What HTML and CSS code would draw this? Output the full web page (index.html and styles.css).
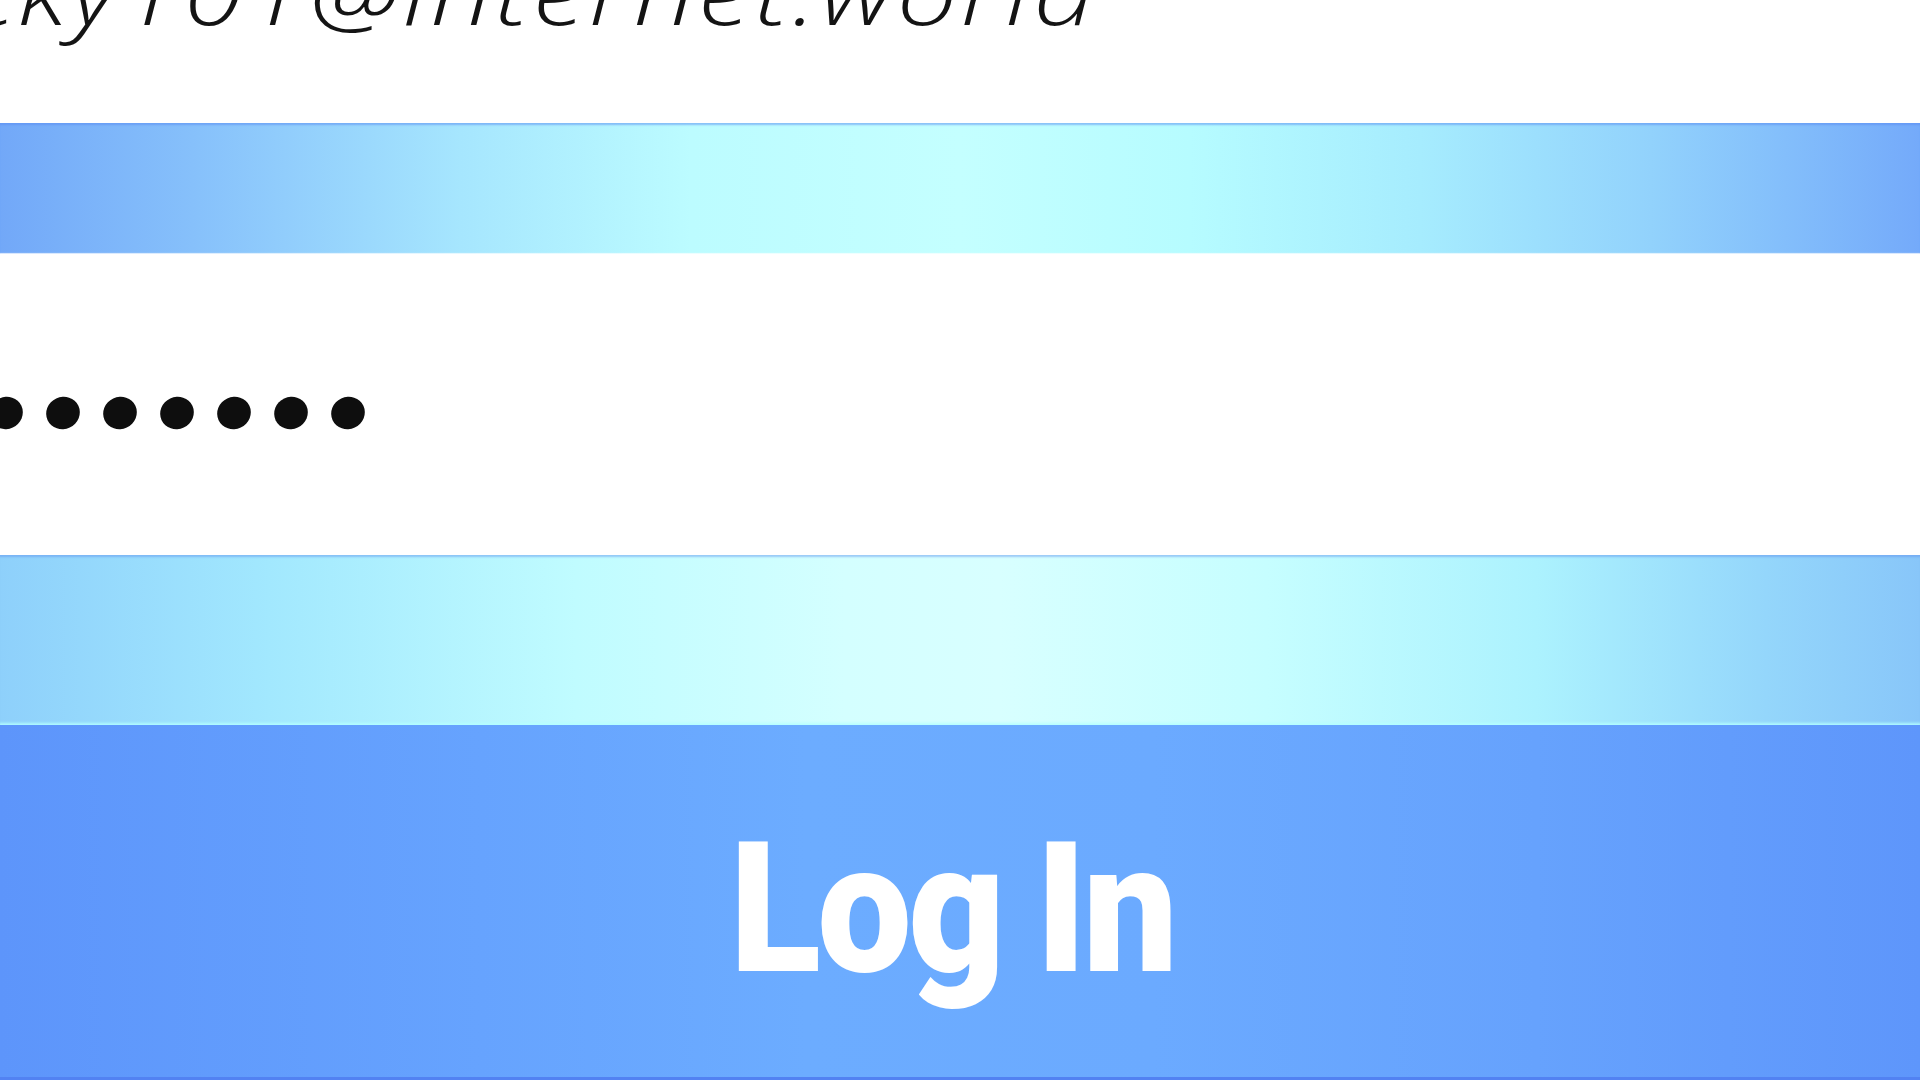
FILE: index.html
```html
<!DOCTYPE html>
<html lang="en">
<head>
<meta charset="utf-8">
<title>Log In</title>
<link rel="stylesheet" href="styles.css">
</head>
<body>
<main class="form">
  <div class="field field-email">
    <div class="email-box">
      <span class="email-text">becky101@internet.world</span>
    </div>
  </div>
  <div class="band band-top"></div>
  <div class="field field-password">
    <div class="dots" aria-label="password">
      <span class="dot"></span><span class="dot"></span><span class="dot"></span><span class="dot"></span><span class="dot"></span><span class="dot"></span><span class="dot"></span>
    </div>
  </div>
  <div class="band band-bottom"></div>
  <button class="login"><span class="login-label">Log In</span></button>
</main>
</body>
</html>
```
FILE: styles.css
```css
* { box-sizing: border-box; }
html, body {
  margin: 0;
  padding: 0;
  width: 1920px;
  height: 1080px;
  overflow: hidden;
  background: #ffffff;
}
.form {
  display: flex;
  flex-direction: column;
  width: 1920px;
  height: 1080px;
}
.field {
  background: #ffffff;
  overflow: hidden;
}
.field-email {
  height: 123px;
  display: flex;
  align-items: flex-start;
}
.email-box {
  width: 1099px;
  flex: none;
  display: flex;
  justify-content: flex-end;
}
.email-text {
  flex: none;
  font-family: "Open Sans", "Lato", sans-serif;
  font-weight: 300;
  font-style: italic;
  font-size: 88px;
  line-height: 88px;
  letter-spacing: 3px;
  color: #141414;
  white-space: nowrap;
  margin-top: -53px;
  transform: scaleX(1.22);
  transform-origin: right center;
}
.band-top {
  height: 131px;
  background: linear-gradient(90deg, #72a8f8 0%, #86c0fb 10%, #a6e6fe 24%, #bcfcff 36%, #c4ffff 50%, #b6fcff 62%, #a6ecfe 74%, #92d2fc 86%, #74aafa 100%);
  box-shadow: inset 0 3px 2px -1px rgba(90, 140, 240, 0.55), inset 0 -2px 1px -1px rgba(255, 255, 255, 0.8);
}
.field-password {
  height: 301px;
  display: flex;
  align-items: center;
}
.dots {
  display: flex;
  gap: 23px;
  margin-left: -11px;
  margin-top: 17px;
}
.dot {
  width: 34px;
  height: 32px;
  border-radius: 50%;
  background: #0e0e0e;
  transform: rotate(-25deg);
}
.band-bottom {
  height: 170px;
  background: linear-gradient(90deg, #8ed0fb 0%, #a2e8fe 14%, #c0fcff 30%, #d4ffff 44%, #d8ffff 52%, #c6feff 66%, #acf2fe 80%, #94d6fb 92%, #88c6f9 100%);
  box-shadow: inset 0 3px 2px -1px rgba(100, 150, 240, 0.5), inset 0 -4px 3px -2px rgba(180, 255, 255, 0.9);
}
.login {
  flex: 1;
  border: 0;
  border-bottom: 3px solid #5282f2;
  margin: 0;
  padding: 94px 0 0 0;
  background: linear-gradient(90deg, #5d95fb 0%, #66a3fe 25%, #6cacff 42%, #6baaff 60%, #66a2fd 80%, #5e96fb 100%);
  color: #ffffff;
  display: flex;
  justify-content: center;
  align-items: flex-start;
}
.login-label {
  font-family: "Roboto", "Inter", sans-serif;
  font-weight: 900;
  font-size: 181px;
  letter-spacing: -4px;
  word-spacing: -4px;
  line-height: 1;
  white-space: nowrap;
  transform: scaleX(0.93);
  margin-right: 16px;
}
```
